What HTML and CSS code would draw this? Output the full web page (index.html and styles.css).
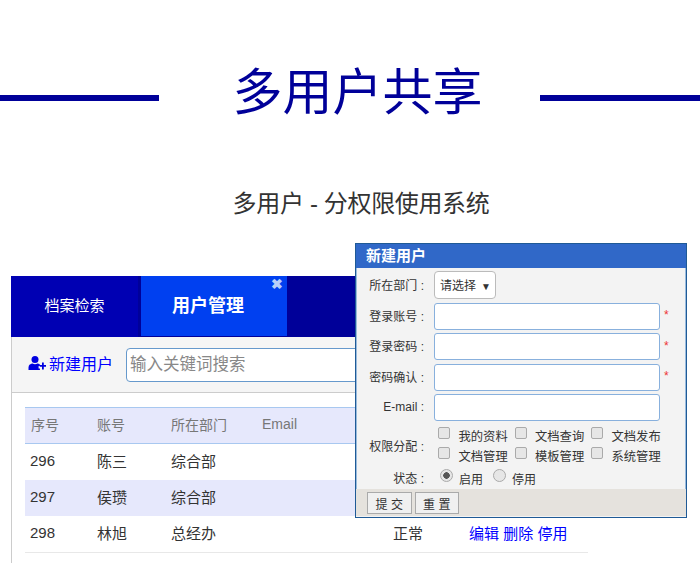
FILE: index.html
```html
<!DOCTYPE html>
<html lang="zh-CN">
<head>
    <meta charset="UTF-8">
    <meta name="viewport" content="width=device-width, initial-scale=1.0">
    <title>多用户共享</title>
    <link rel="stylesheet" href="styles.css">
</head>
<body>
    <header class="title-row">
        <span class="title-line"></span>
        <h1>多用户共享</h1>
        <span class="title-line"></span>
    </header>
    <h2 class="subtitle">多用户 - 分权限使用系统</h2>

    <section class="demo">
        <div class="panel">
            <div class="tabs">
                <div class="tab">档案检索</div>
                <div class="tab tab-active">用户管理<span class="tab-close">✖</span></div>
            </div>
            <div class="toolbar">
                <a class="new-user" href="#">
                    <svg class="new-user-icon" viewBox="0 0 18 14" width="18" height="14">
                        <circle cx="7" cy="3.6" r="3.5"/>
                        <path d="M0.5 14 V11.5 C0.5 9 2.5 7.6 4.6 7.6 C5.8 8.4 8.2 8.4 9.4 7.6 C10.4 7.6 11.2 7.9 11.9 8.4 V10 H10.6 V12.6 H11.9 V14 Z"/>
                        <path d="M14 6.5 H15.8 V9 H18 V10.8 H15.8 V13.4 H14 V10.8 H11.8 V9 H14 Z"/>
                    </svg>新建用户</a>
                <input class="search" type="text" placeholder="输入关键词搜索">
            </div>
            <table class="users">
                <thead>
                    <tr>
                        <th class="col-id">序号</th>
                        <th class="col-account">账号</th>
                        <th class="col-dept">所在部门</th>
                        <th class="col-email">Email</th>
                        <th class="col-state"></th>
                        <th></th>
                    </tr>
                </thead>
                <tbody>
                    <tr>
                        <td>296</td><td>陈三</td><td>综合部</td><td></td><td></td><td></td>
                    </tr>
                    <tr class="stripe">
                        <td>297</td><td>侯瓒</td><td>综合部</td><td></td><td></td><td></td>
                    </tr>
                    <tr>
                        <td>298</td><td>林旭</td><td>总经办</td><td></td><td>正常</td>
                        <td><a href="#">编辑</a> <a href="#">删除</a> <a href="#">停用</a></td>
                    </tr>
                </tbody>
            </table>
        </div>

        <form class="dialog">
            <div class="dialog-title">新建用户</div>
            <div class="dialog-body">
                <div class="field">
                    <label>所在部门 :</label>
                    <button class="picker" type="button">请选择<span class="picker-arrow">▼</span></button>
                </div>
                <div class="field field-input">
                    <label>登录账号 :</label>
                    <input type="text"><span class="required">*</span>
                </div>
                <div class="field field-input">
                    <label>登录密码 :</label>
                    <input type="text"><span class="required">*</span>
                </div>
                <div class="field field-input">
                    <label>密码确认 :</label>
                    <input type="text"><span class="required">*</span>
                </div>
                <div class="field field-input">
                    <label>E-mail :</label>
                    <input type="text">
                </div>
                <div class="field field-perms">
                    <label>权限分配 :</label>
                    <div class="perms">
                        <span class="perm"><i class="check"></i>我的资料</span>
                        <span class="perm"><i class="check"></i>文档查询</span>
                        <span class="perm"><i class="check"></i>文档发布</span>
                        <span class="perm"><i class="check"></i>文档管理</span>
                        <span class="perm"><i class="check"></i>模板管理</span>
                        <span class="perm"><i class="check"></i>系统管理</span>
                    </div>
                </div>
                <div class="field field-state">
                    <label>状态 :</label>
                    <span class="state"><i class="radio radio-on"></i>启用</span>
                    <span class="state"><i class="radio"></i>停用</span>
                </div>
            </div>
            <div class="dialog-foot">
                <button type="button">提 交</button>
                <button type="button">重 置</button>
            </div>
        </form>
    </section>
</body>
</html>
```

FILE: styles.css
```css
body {
    margin: 0;
    font-family: "Liberation Sans", "Noto Sans CJK SC", sans-serif;
    background-color: #fff;
    color: #333;
    overflow: hidden;
}
.title-row {
    display: flex;
    align-items: center;
    justify-content: space-between;
    height: 62px;
    padding-top: 62px;
}
.title-line {
    width: 160px;
    height: 6px;
    margin-top: 10px;
    background-color: #000099;
}
.title-line:first-child {
    margin-left: -1px;
}
.title-row h1 {
    margin: 0;
    padding-left: 16px;
    font-size: 50px;
    font-weight: normal;
    line-height: 62px;
    color: #000099;
}
.subtitle {
    margin: 0;
    padding: 63px 0 0 22px;
    font-size: 24px;
    font-weight: normal;
    line-height: 34px;
    letter-spacing: -0.35px;
    text-align: center;
    color: #333;
}

/* user list behind the dialog */
.demo {
    position: relative;
    height: 344px;
}
.panel {
    position: absolute;
    left: 11px;
    top: 55px;
    width: 577px;
    height: 287px;
    border-left: 1px solid #ccc;
}
.tabs {
    display: flex;
    height: 61px;
    margin-left: -1px;
    background-color: #000099;
}
.tab {
    width: 127px;
    margin-right: 3px;
    line-height: 60px;
    font-size: 15px;
    text-align: center;
    color: #fff;
    background-color: #0000b3;
}
.tab-active {
    position: relative;
    box-sizing: border-box;
    width: 146px;
    height: 60px;
    padding-right: 12px;
    font-size: 18px;
    font-weight: bold;
    line-height: 60px;
    background-color: #0040f0;
}
.tab-close {
    position: absolute;
    right: 4px;
    top: -22px;
    font-size: 14px;
    color: #b8d0f8;
}
.toolbar {
    display: flex;
    align-items: center;
    height: 55px;
    padding-left: 16px;
    background-color: #f5f5f5;
    border-bottom: 1px solid #ccc;
}
.new-user {
    display: flex;
    align-items: center;
    font-size: 16px;
    color: #0000ff;
    text-decoration: none;
    margin: 0 13px 3px 0;
}
.new-user-icon {
    fill: #0000e0;
    margin-right: 3px;
}
.search {
    box-sizing: border-box;
    width: 300px;
    height: 34px;
    padding: 0 3px;
    font-family: inherit;
    font-size: 16.5px;
    border: 1px solid #6699cc;
    border-radius: 4px;
}
.search::placeholder {
    color: #888;
}
.users {
    width: 563px;
    margin: 14px 0 0 13px;
    border-collapse: collapse;
    table-layout: fixed;
    font-size: 15px;
}
.users th {
    height: 32px;
    padding: 0 0 3px 6px;
    font-size: 14px;
    font-weight: normal;
    text-align: left;
    color: #777;
    background-color: #e6e8fc;
    border-top: 1px solid #a8c8f0;
    border-bottom: 1px solid #a8c8f0;
}
.users td {
    height: 33px;
    padding: 0 0 3px 6px;
    color: #333;
}
.users td:first-child {
    padding-left: 5px;
}
.users tbody tr:last-child td {
    border-bottom: 1px solid #e8e8e8;
}
.users .stripe td {
    background-color: #e6e8fc;
}
.users a {
    color: #0000ff;
    text-decoration: none;
}
.col-id { width: 60px; }
.col-account { width: 68px; }
.col-dept { width: 85px; }
.col-email { width: 125px; }
.col-state { width: 70px; }

/* new user dialog */
.dialog {
    position: absolute;
    left: 355px;
    top: 22px;
    box-sizing: border-box;
    width: 332px;
    height: 275px;
    font-size: 12px;
    color: #333;
    background-color: #f3f3f3;
    border: 1px solid #1f5a96;
}
.dialog-title {
    height: 24px;
    padding-left: 10px;
    font-size: 15px;
    font-weight: bold;
    line-height: 24px;
    color: #fff;
    background-color: #3068c8;
}
.dialog-body {
    height: 221px;
    border-left: 1px solid #99bbdd;
    border-right: 1px solid #99bbdd;
}
.field {
    display: flex;
    align-items: center;
    height: 30.5px;
}
.field label {
    box-sizing: border-box;
    width: 72px;
    padding-right: 5px;
    flex: none;
    text-align: right;
    white-space: nowrap;
}
.field:first-child {
    height: 33px;
}
.picker {
    box-sizing: border-box;
    width: 62px;
    height: 28px;
    margin-left: 5px;
    padding: 0 0 0 5px;
    font-family: inherit;
    font-size: 12px;
    text-align: left;
    color: #333;
    background-color: #fff;
    border: 1px solid #bbb;
    border-radius: 4px;
}
.picker-arrow {
    margin-left: 5px;
    font-size: 10px;
}
.field-input label {
    margin-top: -2px;
}
.field-input input {
    box-sizing: border-box;
    width: 226px;
    height: 27px;
    margin-left: 5px;
    background-color: #fff;
    border: 1px solid #88b0dd;
    border-radius: 3px;
}
.required {
    margin: -2px 0 0 4px;
    font-size: 12px;
    color: #ee3333;
}
.field-perms {
    height: 39px;
    margin-top: 3px;
}
.perms {
    display: grid;
    grid-template-columns: 76.5px 76.5px 76.5px;
    row-gap: 1px;
    margin: 2px 0 0 9px;
}
.perm {
    display: flex;
    height: 19px;
    font-size: 12.3px;
    line-height: 21px;
    white-space: nowrap;
}
.check {
    box-sizing: border-box;
    width: 12px;
    height: 12px;
    margin-right: 8.5px;
    background-color: #e6e6e6;
    border: 1px solid #aaa;
    border-radius: 2px;
}
.field-state {
    height: 22px;
    margin-top: 1px;
}
.state {
    display: flex;
    align-items: center;
    padding-top: 6px;
    line-height: 18px;
    margin-right: 10px;
}
.field-state label + .state {
    margin-left: 11px;
}
.radio {
    box-sizing: border-box;
    width: 13px;
    height: 13px;
    margin-right: 6px;
    margin-top: -9px;
    background-color: #e6e6e6;
    border: 1px solid #aaa;
    border-radius: 50%;
}
.radio-on {
    background: radial-gradient(circle, #555 0, #555 3px, #e6e6e6 3.5px);
}
.dialog-foot {
    display: flex;
    gap: 3px;
    height: 27px;
    padding: 3px 0 0 11px;
    box-sizing: border-box;
    background-color: #e5e2dd;
}
.dialog-foot button {
    box-sizing: border-box;
    width: 44.5px;
    height: 22px;
    padding: 0;
    font-family: inherit;
    font-size: 12px;
    color: #333;
    background-color: #f0f0f0;
    border: 1px solid #aaa;
}
```
